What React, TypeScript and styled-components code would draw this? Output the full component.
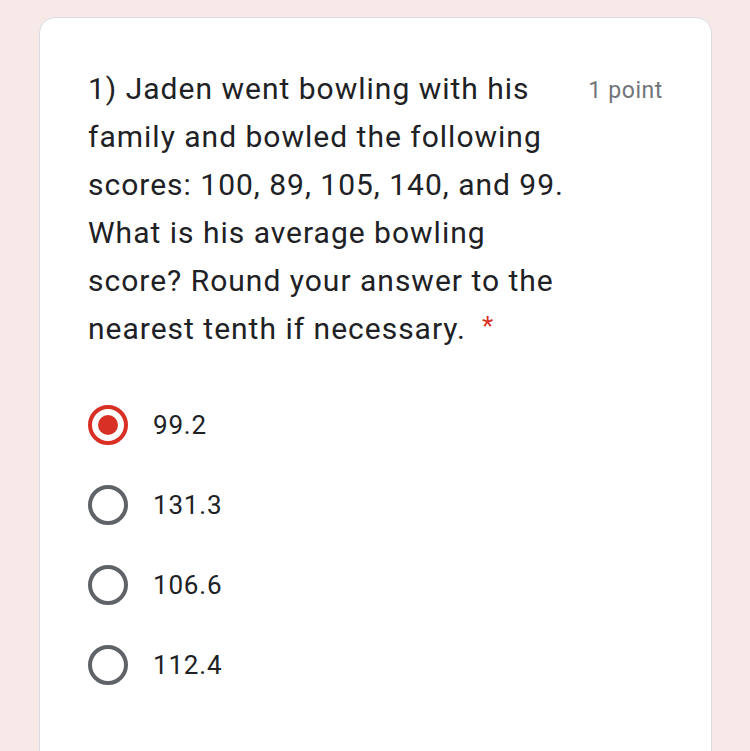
import styled, { createGlobalStyle } from 'styled-components'

const GlobalStyle = createGlobalStyle`
    html, body {
        margin: 0;
        padding: 0;
        background: #f8e9e9;
        font-family: Roboto, "Noto Sans", Arial, sans-serif;
    }
`

const questionLines = [
    '1) Jaden went bowling with his',
    'family and bowled the following',
    'scores: 100, 89, 105, 140, and 99.',
    'What is his average bowling',
    'score? Round your answer to the',
]

const options = ['99.2', '131.3', '106.6', '112.4']
const selected = '99.2'

const App = () => {
    return (
        <>
            <GlobalStyle />
            <Page>
                <Card>
                    <Header>
                        <Question>
                            {questionLines.map((line) => (
                                <Line key={line}>{line}</Line>
                            ))}
                            <Line>
                                nearest tenth if necessary.<Required>*</Required>
                            </Line>
                        </Question>
                        <Points>1 point</Points>
                    </Header>
                    <Options>
                        {options.map((opt) => (
                            <Option key={opt}>
                                <Radio $checked={opt === selected} />
                                <OptionLabel>{opt}</OptionLabel>
                            </Option>
                        ))}
                    </Options>
                </Card>
            </Page>
        </>
    )
}

export default App

const Page = styled.div`
    width: 750px;
    height: 751px;
    overflow: hidden;
    padding: 17px 38px 0 39px;
    box-sizing: border-box;
`

const Card = styled.div`
    background: #fff;
    border: 1.5px solid #dadce0;
    border-radius: 16px;
    height: 780px;
    box-sizing: border-box;
    padding: 47px 48px 0 48px;
`

const Header = styled.div`
    display: flex;
    justify-content: space-between;
    align-items: flex-start;
`

const Question = styled.div`
    font-size: 30px;
    line-height: 48px;
    color: #202124;
    letter-spacing: 1px;
`

const Line = styled.div`
    white-space: nowrap;
    height: 48px;
`

const Required = styled.span`
    color: #d93025;
    margin-left: 16px;
    font-size: 26px;
    line-height: 1;
    vertical-align: 4px;
`

const Points = styled.div`
    font-size: 23px;
    line-height: 48px;
    color: #70757a;
    letter-spacing: 0.6px;
    padding-top: 2px;
`

const Options = styled.div`
    display: flex;
    flex-direction: column;
    gap: 40px;
    margin-top: 52px;
`

const Option = styled.div`
    display: flex;
    align-items: center;
    gap: 25px;
    height: 40px;
`

const Radio = styled.div<{ $checked?: boolean }>`
    position: relative;
    width: 40px;
    height: 40px;
    box-sizing: border-box;
    border-radius: 50%;
    border: 4px solid ${({ $checked }) => ($checked ? '#d93025' : '#5f6368')};
    flex-shrink: 0;
    &::after {
        content: '';
        display: ${({ $checked }) => ($checked ? 'block' : 'none')};
        position: absolute;
        top: 6px;
        left: 6px;
        width: 20px;
        height: 20px;
        border-radius: 50%;
        background: #d93025;
    }
`

const OptionLabel = styled.div`
    font-size: 26px;
    color: #202124;
    letter-spacing: 0.8px;
`
